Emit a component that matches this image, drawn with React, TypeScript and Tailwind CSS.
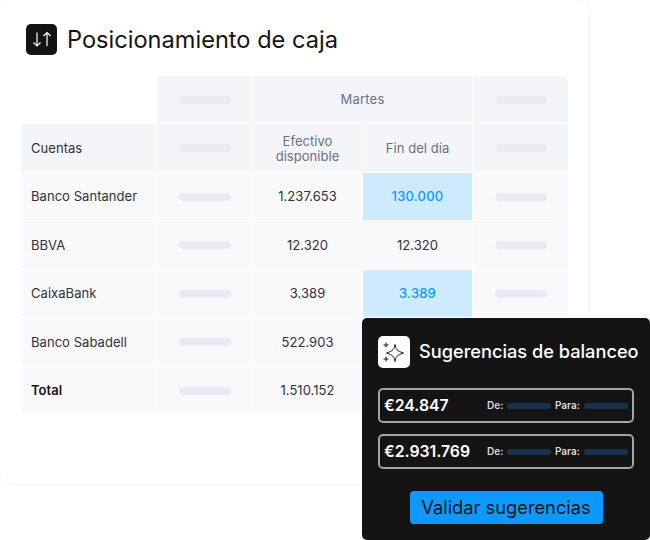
const rows = [
  { name: "Banco Santander", cash: "1.237.653", end: "130.000", hl: true },
  { name: "BBVA", cash: "12.320", end: "12.320", hl: false },
  { name: "CaixaBank", cash: "3.389", end: "3.389", hl: true },
  { name: "Banco Sabadell", cash: "522.903", end: "", hl: false },
  { name: "Total", cash: "1.510.152", end: "", hl: false },
];

function Bar() {
  return <div className="-mt-px h-2 w-[52px] rounded-full bg-[#e8ebf3]" />;
}

function Cell({ children, className = "" }: { children?: React.ReactNode; className?: string }) {
  return <div className={`flex items-center justify-center pt-px ${className}`}>{children}</div>;
}

function Suggestion({ amount }: { amount: string }) {
  return (
    <div className="flex h-[35px] w-[256px] items-center rounded-[5px] border-2 border-[#a3a3a3] px-[4px]">
      <span className="w-[103px] text-[15.8px] font-semibold text-white">{amount}</span>
      <span className="w-[20px] text-[10px] font-semibold text-[#d9d9d9]">De:</span>
      <div className="h-[6px] w-[44px] rounded-full bg-[#17324a]" />
      <span className="ml-[4px] w-[29px] text-[10px] font-semibold text-[#d9d9d9]">Para:</span>
      <div className="h-[6px] w-[44px] rounded-full bg-[#17324a]" />
    </div>
  );
}

export default function App() {
  return (
    <div className="relative h-[540px] w-[650px] overflow-hidden bg-white font-['Inter',sans-serif]">
      {/* card, its top and left edges sit just off the page */}
      <div className="-mt-px -ml-px h-[486px] w-[591px] rounded-[12px] border border-[#f5f5f7] pt-[24px] pl-[21px]">
        <div className="ml-[5px] flex items-center gap-[10px]">
          <div className="h-[31px] w-[31px] rounded-[5px] bg-[#141414]">
            <svg width="31" height="31" viewBox="0 0 31 31" fill="none" stroke="#fff" strokeWidth="1.2">
              <path d="M11 8.5 V22 M7.5 18.5 L11 22 L14.5 18.5" />
              <path d="M21 22 V8.5 M17.5 12 L21 8.5 L24.5 12" />
            </svg>
          </div>
          <h1 className="text-[23.6px] leading-[31px] text-[#141414]">Posicionamiento de caja</h1>
        </div>

        {/* table */}
        <div className="mt-[21px] grid auto-rows-[47.47px] grid-cols-[135px_95px_109px_109px_95px] gap-px text-[13px] tracking-[0.05px] text-[#2f333d]">
          <div />
          <Cell className="rounded-tl-[5px] bg-[#f4f5f8]"><Bar /></Cell>
          <Cell className="col-span-2 bg-[#f4f5f8] tracking-[0.2px] text-[#66728a]">Martes</Cell>
          <Cell className="rounded-tr-[5px] bg-[#f4f5f8]"><Bar /></Cell>

          <Cell className="justify-start rounded-tl-[5px] bg-[#f4f5f8] pl-[10px]">Cuentas</Cell>
          <Cell className="bg-[#f4f5f8]"><Bar /></Cell>
          <Cell className="bg-[#f4f5f8] text-center leading-[15px] text-[#66728a]">Efectivo<br />disponible</Cell>
          <Cell className="bg-[#f4f5f8] text-[#66728a]">Fin del día</Cell>
          <Cell className="bg-[#f4f5f8]"><Bar /></Cell>

          {rows.map((r, i) => (
            <div key={r.name} className="contents">
              <Cell className={`justify-start bg-[#f9f9fc] pl-[10px] ${i === 4 ? "rounded-bl-[5px] font-semibold text-[#141414]" : ""}`}>{r.name}</Cell>
              <Cell className="bg-[#f9f9fc]"><Bar /></Cell>
              <Cell className="bg-[#f9f9fc]">{r.cash}</Cell>
              <Cell className={r.hl ? "bg-[#cdeaff] font-medium tracking-[0.2px] text-[#0d99ff]" : "bg-[#f9f9fc]"}>{r.end}</Cell>
              <Cell className="bg-[#f9f9fc]">{i < 3 ? <Bar /> : null}</Cell>
            </div>
          ))}
        </div>
      </div>

      {/* suggestions popup */}
      <div className="absolute top-[318px] left-[362px] flex h-[222px] w-[288px] flex-col items-center rounded-[5px] bg-[#141414] pt-[18px]">
        <div className="flex w-[256px] items-center gap-[9px]">
          <div className="h-[32px] w-[32px] shrink-0 rounded-[5px] bg-white">
            <svg width="32" height="32" viewBox="0 0 32 32" fill="none" stroke="#141414" strokeWidth="1">
              <path d="M17 8.5 C17.6 13 19 15 25.5 17 C19 19 17.6 21 17 25.5 C16.4 21 15 19 8.5 17 C15 15 16.4 13 17 8.5 Z" />
              <path d="M8 6.5 V11.5 M5.5 9 H10.5 M8 20.5 V25.5 M5.5 23 H10.5" />
            </svg>
          </div>
          <span className="whitespace-nowrap text-[18.2px] font-medium text-white">Sugerencias de balanceo</span>
        </div>
        <div className="mt-[20px] flex flex-col gap-[11px]">
          <Suggestion amount="€24.847" />
          <Suggestion amount="€2.931.769" />
        </div>
        <button className="mt-[22px] h-[33px] w-[193px] rounded-[4px] bg-[#0d99ff] text-[18.3px] text-[#141414]">
          Validar sugerencias
        </button>
      </div>
    </div>
  );
}
